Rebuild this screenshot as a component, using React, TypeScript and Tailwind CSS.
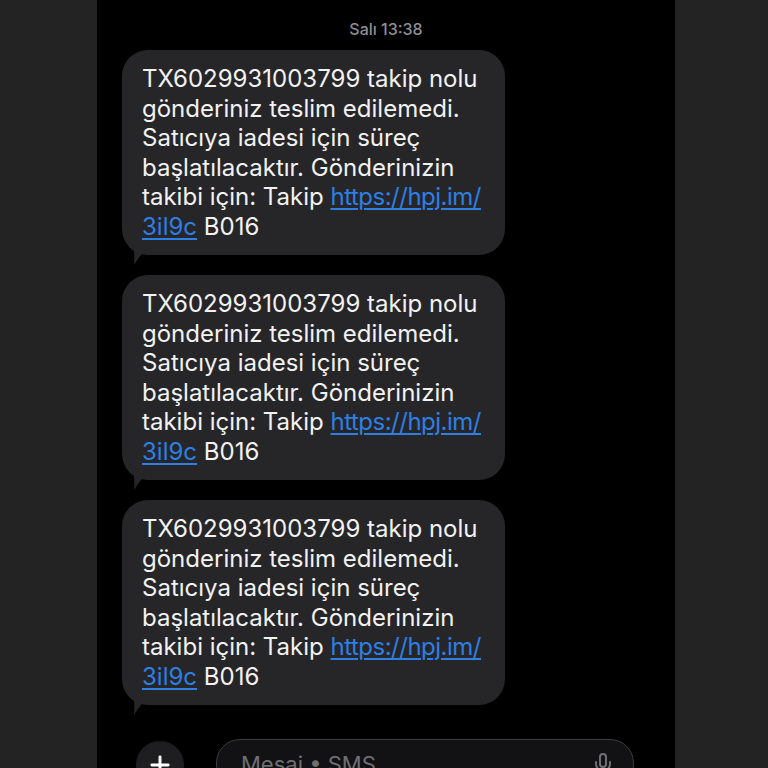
import { Plus, Mic } from 'lucide-react';

const font = { fontFamily: 'Inter, "Noto Sans", sans-serif' };

function Bubble() {
    return (
        <div className="relative w-[383px] shrink-0">
            <div className="rounded-[26px] bg-[#262628] pl-5 pr-3 py-[14px] text-[24px] leading-[29.5px] text-[#f2f2f2]">
                TX6029931003799 takip nolu gönderiniz teslim edilemedi. Satıcıya iadesi için süreç başlatılacaktır. Gönderinizin takibi için: Takip{' '}
                <span className="text-[#2d7fe3] underline underline-offset-[3px] decoration-[1.5px] tracking-[-0.5px]">https://hpj.im/</span>
                <br />
                <span className="text-[#2d7fe3] underline underline-offset-[3px] decoration-[1.5px]">3il9c</span> B016
            </div>
            <svg className="absolute left-[4px] bottom-[-11px]" width="30" height="24" viewBox="0 0 30 24">
                <path d="M6 0 L26 0 C22 6 16 10 8 23 C9 14 8 6 6 0 Z" fill="#262628" />
            </svg>
        </div>
    );
}

export default function App() {
    return (
        <div className="w-[768px] h-[768px] overflow-hidden bg-[#232323] flex pl-[97px]" style={font}>
            <div className="w-[578px] h-full bg-black flex flex-col pl-[25px]">
                <div className="h-[50px] shrink-0 flex items-start justify-center pt-[17px] pr-[25px] text-[16px] text-[#8e8e93] font-medium">
                    Salı 13:38
                </div>
                <div className="flex flex-col gap-[20px] shrink-0">
                    <Bubble />
                    <Bubble />
                    <Bubble />
                </div>
                <div className="mt-[34px] shrink-0 flex items-start gap-[32px] pl-[14px]">
                    <div className="w-[48px] h-[48px] mt-[2px] rounded-full bg-[#1e1e20] flex items-center justify-center text-white">
                        <Plus size={28} strokeWidth={2.5} />
                    </div>
                    <div className="w-[418px] h-[50px] rounded-[24px] border border-[#3a3a3c] bg-[#121214] flex items-center justify-between pl-[24px] pr-[18px]">
                        <span className="text-[22px] text-[#6e6e73]">Mesaj • SMS</span>
                        <Mic size={24} className="text-[#6e6e73]" />
                    </div>
                </div>
            </div>
        </div>
    );
}
